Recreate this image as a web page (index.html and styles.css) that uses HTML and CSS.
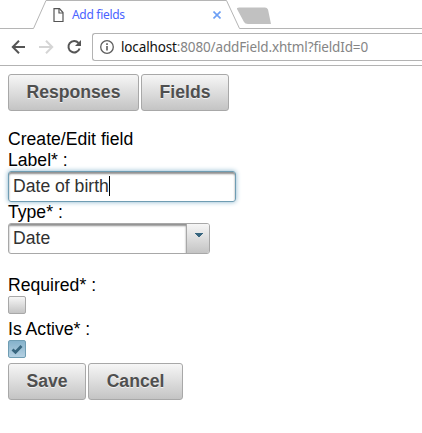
FILE: index.html
```html
<!DOCTYPE html>
<html lang="en">
<head>
<meta charset="utf-8">
<title>Add fields</title>
<link rel="stylesheet" href="styles.css">
</head>
<body>
<header class="browser">
  <div class="tabstrip">
    <svg class="tab-shape" width="422" height="29" viewBox="0 0 422 29" fill="none">
      <path d="M0 28.5H33.5L46 .5H226.500L239.500 28.5H422" stroke="#b5b5b5"/>
      <path d="M239 7.500H265Q267 7.500 268 9.500L271 24H248Q245 24 244 22L237 9Q236.500 7.500 239 7.500Z" fill="#c1c1c1"/>
    </svg>
    <svg class="page-icon" width="11" height="15" viewBox="0 0 11 15" fill="none" stroke="#555" stroke-width="1.200">
      <path d="M1 .7H6.500L10 4.500V13.500H1Z"/><path d="M6 .8V5H10"/>
    </svg>
    <span class="tab-title">Add fields</span>
    <svg class="tab-close" width="8" height="8" viewBox="0 0 8 8" stroke="#6c9ff5" stroke-width="1.600"><path d="M.5.500L7.500 7.500M7.500.500L.500 7.500"/></svg>
  </div>
  <div class="toolbar">
    <svg class="nav" width="81" height="16" viewBox="0 0 81 16" fill="none" stroke-width="2">
      <path d="M14 8H2M8 1.800L1.800 8L8 14.200" stroke="#555"/>
      <path d="M28 8H41M35 1.800L41.200 8L35 14.200" stroke="#d5d5d5"/>
      <path d="M67.500 4A5.700 5.700 0 1 0 68.600 9.500" stroke="#555"/>
      <path d="M70 1V7H64Z" fill="#555"/>
    </svg>
    <div class="address">
      <svg class="info" width="14" height="14" viewBox="0 0 14 14" fill="none" stroke="#5d5d5d">
        <circle cx="7" cy="7" r="6.300" stroke-width="1.300"/><path d="M7 6V10.500M7 3.300V5" stroke-width="1.600"/>
      </svg>
      <span class="url"><span class="host">localhost</span>:8080/addField.xhtml?fieldId=0</span>
    </div>
  </div>
</header>
<main class="page">
  <nav class="buttons">
    <button class="btn responses">Responses</button>
    <button class="btn fields">Fields</button>
  </nav>
  <div class="heading">Create/Edit field</div>
  <label class="label">Label* :</label>
  <div class="input">Date of birth<span class="caret"></span></div>
  <label class="label type">Type* :</label>
  <div class="select"><span class="value">Date</span><span class="trigger"><svg width="8" height="5" viewBox="0 0 8 5"><path d="M0 0H8V1H7V2H6V3H5V4H3V3H2V2H1V1H0Z" fill="#38667f"/></svg></span></div>
  <label class="label required">Required* :</label>
  <div class="check"></div>
  <label class="label active">Is Active* :</label>
  <div class="check checked"><svg width="12" height="11" viewBox="0 0 12 11" fill="none" stroke="#38667f" stroke-width="2.800"><path d="M1.500 5.500L4.500 8.300L10.500 2"/></svg></div>
  <div class="buttons actions">
    <button class="btn save">Save</button>
    <button class="btn cancel">Cancel</button>
  </div>
</main>
</body>
</html>
```

FILE: styles.css
```css
* { box-sizing: border-box; }
body { margin: 0; background: #fff; color: #000; overflow: hidden; font: 17.6px/20px "Liberation Sans", Arial, sans-serif; }
svg { display: block; flex: none; }
.browser { height: 66px; border-bottom: 1px solid #b3b3b3; font-family: "Noto Sans", sans-serif; }
.tabstrip { position: relative; height: 29px; display: flex; align-items: flex-start; padding-left: 53px; }
.tab-shape { position: absolute; left: 0; top: 0; }
.page-icon { margin-top: 8px; }
.tab-title { margin: 5px 0 0 8px; width: 141px; font-size: 12px; line-height: 20px; color: #4a63ff; letter-spacing: -.3px; }
.tab-close { margin-top: 11px; }
.toolbar { display: flex; height: 36px; padding: 4px 0 0 11px; }
.nav { margin-top: 6px; }
.address { flex: 1; height: 28px; border: 1px solid #b3b3b3; border-right: 0; border-radius: 3px 0 0 3px; display: flex; align-items: center; padding-left: 7px; }
.url { margin-left: 7px; font-size: 13.5px; line-height: 20px; letter-spacing: -.14px; color: #858585; white-space: nowrap; }
.host { color: #111; }
.page { padding: 8px; }
.buttons { display: flex; gap: 2px; }
.btn { height: 37px; padding: 0 0 2px; border: 1px solid #a8a8a8; border-radius: 3px; background: linear-gradient(#f6f6f6, #c4c4c4); color: #4f4f4f; font: bold 17.6px/20px "Liberation Sans", Arial, sans-serif; text-shadow: 0 1px 0 rgba(255,255,255,.7); }
.responses { width: 131px; }
.fields { width: 88px; }
.save { width: 78px; }
.cancel { width: 95px; }
.heading { margin-top: 18px; height: 21px; }
.label { display: block; height: 21px; }
.input { display: flex; align-items: center; width: 228px; height: 31px; padding: 0 4px 1px; border: 1px solid #6f9db3; border-radius: 3px; color: #313131; box-shadow: 0 0 5px #85b2cb, inset 0 2px 2px #8f8f8f; }
.caret { width: 1px; height: 20px; background: #000; }
.select { display: flex; width: 202px; height: 31px; border: 1px solid #a8a8a8; border-radius: 3px; overflow: hidden; color: #313131; }
.value { flex: 1; padding: 4px; box-shadow: inset 0 2px 2px #8f8f8f; }
.trigger { width: 23px; border-left: 1px solid #a8a8a8; background: linear-gradient(#f6f6f6, #c4c4c4); padding: 9px 0 0 8px; }
.required { margin-top: 21px; }
.check { width: 18px; height: 18px; border: 1px solid #a8a8a8; border-radius: 2px; background: linear-gradient(#f6f6f6, #c4c4c4); }
.active { margin-top: 5px; }
.checked { display: flex; align-items: center; justify-content: center; border-color: #6f9db3; background: linear-gradient(#85b2cb, #b4d0e2); }
.actions { margin-top: 5px; }
```
